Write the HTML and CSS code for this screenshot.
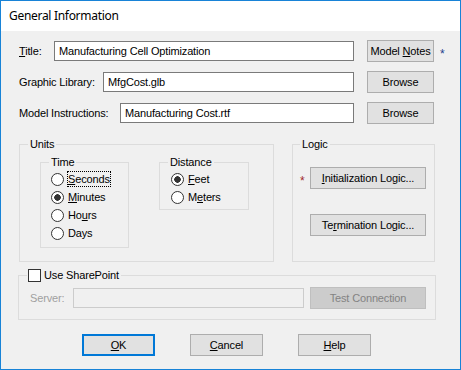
FILE: index.html
```html
<!DOCTYPE html>
<html lang="en">
  <head>
    <meta charset="UTF-8" />
    <meta name="viewport" content="width=device-width, initial-scale=1.0" />
    <title>General Information</title>
    <link rel="stylesheet" href="styles.css">
  </head>
  <body>
    <div class="dialog">
      <div class="titlebar">General Information</div>
      <div class="dialog-body">
        <div class="field-row">
          <div class="field-main">
            <label class="field-label"><u>T</u>itle:</label>
            <input type="text" class="text-input input-title" value="Manufacturing Cell Optimization" />
          </div>
          <button class="btn btn-side">Model <u>N</u>otes</button>
          <span class="mark mark-blue">*</span>
        </div>
        <div class="field-row">
          <div class="field-main">
            <label class="field-label">Graphic Library:</label>
            <input type="text" class="text-input input-library" value="MfgCost.glb" />
          </div>
          <button class="btn btn-side">Browse</button>
        </div>
        <div class="field-row">
          <div class="field-main">
            <label class="field-label">Model Instructions:</label>
            <input type="text" class="text-input input-instructions" value="Manufacturing Cost.rtf" />
          </div>
          <button class="btn btn-side">Browse</button>
        </div>

        <div class="groups">
          <fieldset class="group group-units">
            <legend>Units</legend>
            <div class="unit-groups">
              <fieldset class="group group-time">
                <legend>Time</legend>
                <div class="radio-list">
                  <label class="radio"><input type="radio" name="time" /><span class="focus-text"><u>S</u>econds</span></label>
                  <label class="radio"><input type="radio" name="time" checked /><span><u>M</u>inutes</span></label>
                  <label class="radio"><input type="radio" name="time" /><span>Ho<u>u</u>rs</span></label>
                  <label class="radio"><input type="radio" name="time" /><span>Days</span></label>
                </div>
              </fieldset>
              <fieldset class="group group-distance">
                <legend>Distance</legend>
                <div class="radio-list">
                  <label class="radio"><input type="radio" name="distance" checked /><span><u>F</u>eet</span></label>
                  <label class="radio"><input type="radio" name="distance" /><span>M<u>e</u>ters</span></label>
                </div>
              </fieldset>
            </div>
          </fieldset>

          <fieldset class="group group-logic">
            <legend>Logic</legend>
            <div class="logic-grid">
              <span class="mark mark-red">*</span>
              <button class="btn btn-logic"><u>I</u>nitialization Logic...</button>
              <span></span>
              <button class="btn btn-logic btn-term">Te<u>r</u>mination Logic...</button>
            </div>
          </fieldset>
        </div>

        <fieldset class="group group-sharepoint">
          <legend><label class="check"><input type="checkbox" />Use SharePoint</label></legend>
          <div class="server-row">
            <label class="server-label">Server:</label>
            <input type="text" class="text-input input-server" disabled />
            <button class="btn btn-logic btn-disabled" disabled>Test Connection</button>
          </div>
        </fieldset>

        <div class="actions">
          <button class="btn btn-action btn-default"><u>O</u>K</button>
          <button class="btn btn-action"><u>C</u>ancel</button>
          <button class="btn btn-action"><u>H</u>elp</button>
        </div>
      </div>
    </div>
  </body>
</html>
```

FILE: styles.css
```css
/* Reset CSS */
* {
  box-sizing: border-box;
}

body {
  margin: 0;
  font-family: "Liberation Sans", Arial, sans-serif;
  font-size: 11px;
  letter-spacing: -0.15px;
  color: #000;
}

button,
input {
  font: inherit;
  letter-spacing: inherit;
  color: inherit;
}

/* Window */
.dialog {
  width: 461px;
  height: 370px;
  border: 1px solid #1883d7;
  background-color: #f0f0f0;
}

.titlebar {
  height: 30px;
  padding-left: 8px;
  background-color: #fff;
  font-family: "Noto Sans", sans-serif;
  font-size: 12px;
  letter-spacing: -0.3px;
  line-height: 30px;
}

.dialog-body {
  padding: 9px 0 0 18px;
}

/* Top fields */
.field-row {
  display: flex;
  align-items: center;
  height: 22px;
  margin-bottom: 9px;
}

.field-main {
  display: flex;
  align-items: center;
  justify-content: space-between;
  width: 335px;
}

.text-input {
  height: 20px;
  margin: 0;
  padding: 0 4px;
  border: 1px solid #7a7a7a;
  background-color: #fff;
  outline: none;
}

.input-title {
  width: 300px;
}

.input-library {
  width: 251px;
}

.input-instructions {
  width: 234px;
}

.btn {
  height: 22px;
  margin: 0;
  padding: 0;
  border: 1px solid #adadad;
  background-color: #e1e1e1;
  text-align: center;
}

.btn-side {
  width: 67px;
  margin-left: 13px;
}

.mark {
  padding-top: 5px;
  font-size: 12px;
}

.mark-blue {
  margin-left: 6px;
  color: #1f3f8c;
}

.mark-red {
  color: #a0282a;
}

/* Group boxes */
.groups {
  display: flex;
  margin-top: 14px;
}

.group {
  min-width: 0;
  margin: 0;
  padding: 5px 8px 13px;
  border: 1px solid #dcdcdc;
}

.group legend {
  padding: 0 2px;
  line-height: 13px;
}

.group-units {
  width: 255px;
}

.unit-groups {
  display: flex;
  align-items: flex-start;
  gap: 30px;
  margin-left: 12px;
}

.group-time {
  width: 89px;
  padding: 1px 8px 5px;
}

.group-distance {
  width: 90px;
  padding: 1px 8px 3px;
}

.radio-list {
  display: flex;
  flex-direction: column;
}

.group-time .radio-list {
  margin-left: 2px;
}

.group-distance .radio-list {
  margin-left: 3px;
}

.radio {
  display: flex;
  align-items: center;
  height: 18px;
}

.radio input {
  appearance: none;
  width: 13px;
  height: 13px;
  margin: 0 3px 0 0;
  border: 1px solid #333;
  border-radius: 50%;
  background-color: #fff;
}

.radio input:checked {
  background: radial-gradient(circle, #333 0 3px, #fff 3.5px);
}

.radio span {
  padding: 2px 1px;
}

.radio .focus-text {
  outline: 1px dotted #000;
  outline-offset: -1px;
}

.group-logic {
  width: 143px;
  margin-left: 18px;
  padding-left: 7px;
}

.logic-grid {
  display: grid;
  grid-template-columns: 10px 116px;
  align-items: center;
  margin-top: 11px;
}

.btn-logic {
  width: 116px;
}

.btn-term {
  margin-top: 25px;
}

/* SharePoint */
.group-sharepoint {
  width: 418px;
  margin-top: 7px;
  margin-left: -1px;
  padding: 5px 8px 10px;
}

.group-sharepoint legend {
  padding: 0 2px 0 1px;
}

.check {
  display: flex;
  align-items: center;
  gap: 3px;
}

.check input {
  appearance: none;
  width: 13px;
  height: 13px;
  margin: 0;
  border: 1px solid #333;
  background-color: #fff;
}

.server-row {
  display: flex;
  align-items: center;
  padding-left: 3px;
}

.server-label {
  width: 43px;
  color: #a0a0a0;
}

.input-server {
  width: 231px;
  border-color: #cccccc;
  background-color: #f0f0f0;
}

.btn-disabled {
  margin-left: 6px;
  border-color: #bfbfbf;
  background-color: #cccccc;
  color: #838383;
}

/* Buttons */
.actions {
  display: flex;
  gap: 35px;
  margin-top: 14px;
  padding-left: 63px;
}

.btn-action {
  width: 73px;
}

.btn-default {
  border: 2px solid #0078d7;
}
```
